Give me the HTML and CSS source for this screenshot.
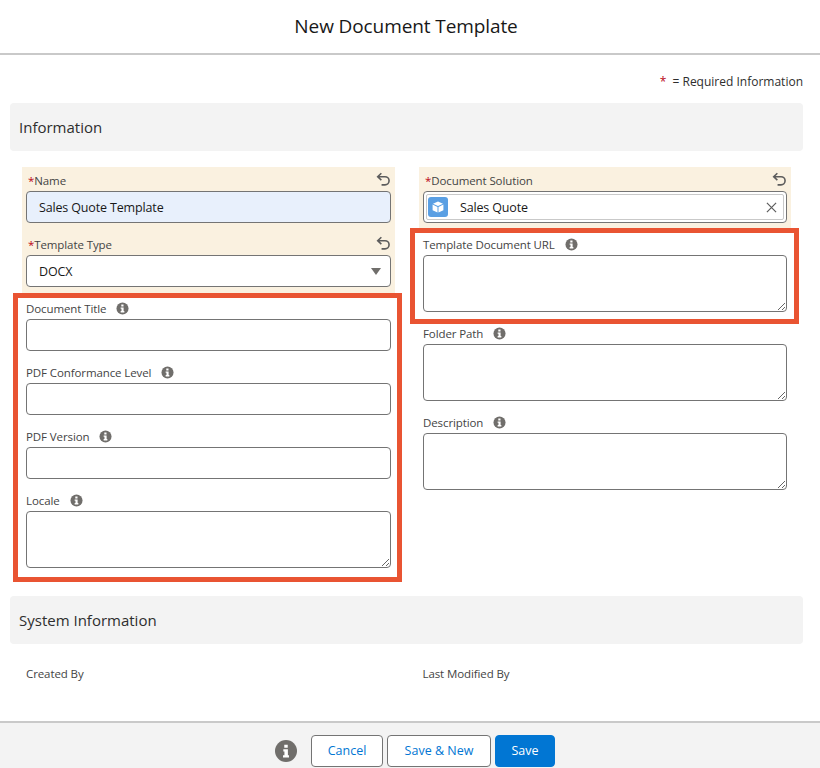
FILE: index.html
```html
<!DOCTYPE html>
<html lang="en">
<head>
<meta charset="utf-8">
<title>New Document Template</title>
<link rel="stylesheet" href="styles.css">
</head>
<body>
<div class="page">
  <header class="header"><h1>New Document Template</h1></header>
  <main class="main">
    <p class="required"><span class="star">*</span> <span class="req-text">= Required Information</span></p>
    <h2 class="section">Information</h2>
    <div class="columns">
      <div class="col">
        <div class="field changed">
          <div class="label"><span class="star">*</span>Name
            <button class="undo" aria-label="Undo"><svg viewBox="0 0 14 14"><path d="M5 1.200 1.600 4.400 5 7.600M1.800 4.400H8.400a3.800 3.800 0 0 1 0 7.600H5.200"/></svg></button>
          </div>
          <div class="control filled">Sales Quote Template</div>
        </div>
        <div class="field changed">
          <div class="label"><span class="star">*</span>Template Type
            <button class="undo" aria-label="Undo"><svg viewBox="0 0 14 14"><path d="M5 1.200 1.600 4.400 5 7.600M1.800 4.400H8.400a3.800 3.800 0 0 1 0 7.600H5.200"/></svg></button>
          </div>
          <div class="control select">DOCX<svg class="caret" viewBox="0 0 10 7"><path d="M0 0h10L5 7z"/></svg></div>
        </div>
        <div class="field">
          <div class="label">Document Title<svg class="info" viewBox="0 0 14 14"><circle cx="7" cy="7" r="6.5"/><path class="i" d="M5.7 2.8h2.4v2H5.7zM5 5.9h3.2v3.8h.8v1.5H5V9.700h.9V7.400H5z"/></svg></div>
          <input class="control" type="text" aria-label="Document Title">
        </div>
        <div class="field">
          <div class="label">PDF Conformance Level<svg class="info" viewBox="0 0 14 14"><circle cx="7" cy="7" r="6.5"/><path class="i" d="M5.7 2.8h2.4v2H5.7zM5 5.9h3.2v3.8h.8v1.500H5V9.700h.9V7.400H5z"/></svg></div>
          <input class="control" type="text" aria-label="PDF Conformance Level">
        </div>
        <div class="field">
          <div class="label">PDF Version<svg class="info" viewBox="0 0 14 14"><circle cx="7" cy="7" r="6.5"/><path class="i" d="M5.7 2.8h2.4v2H5.7zM5 5.9h3.2v3.8h.8v1.500H5V9.700h.9V7.400H5z"/></svg></div>
          <input class="control" type="text" aria-label="PDF Version">
        </div>
        <div class="field">
          <div class="label">Locale<svg class="info" viewBox="0 0 14 14"><circle cx="7" cy="7" r="6.5"/><path class="i" d="M5.7 2.8h2.4v2H5.7zM5 5.9h3.2v3.8h.8v1.500H5V9.700h.9V7.400H5z"/></svg></div>
          <textarea class="control area" aria-label="Locale"></textarea>
        </div>
      </div>
      <div class="col">
        <div class="field changed">
          <div class="label"><span class="star">*</span>Document Solution
            <button class="undo" aria-label="Undo"><svg viewBox="0 0 14 14"><path d="M5 1.200 1.600 4.400 5 7.600M1.800 4.400H8.400a3.800 3.800 0 0 1 0 7.600H5.200"/></svg></button>
          </div>
          <div class="control lookup">
            <div class="pill">
              <span class="pill-icon"><svg viewBox="0 0 20 20"><path class="cube-top" d="M10 4.500 15 6.800 10 9.100 5 6.800z"/><path class="cube-side" d="M4.600 7.600 9.500 9.900V15.500L4.600 13.200zM15.400 7.600 10.500 9.900V15.500L15.400 13.200z"/></svg></span>
              <span class="pill-text">Sales Quote</span>
              <svg class="clear" viewBox="0 0 12 12"><path d="M1 1 11 11M11 1 1 11"/></svg>
            </div>
          </div>
        </div>
        <div class="field">
          <div class="label">Template Document URL<svg class="info" viewBox="0 0 14 14"><circle cx="7" cy="7" r="6.5"/><path class="i" d="M5.7 2.8h2.4v2H5.7zM5 5.9h3.2v3.8h.8v1.500H5V9.700h.9V7.400H5z"/></svg></div>
          <textarea class="control area" aria-label="Template Document URL"></textarea>
        </div>
        <div class="field">
          <div class="label">Folder Path<svg class="info" viewBox="0 0 14 14"><circle cx="7" cy="7" r="6.5"/><path class="i" d="M5.7 2.8h2.4v2H5.7zM5 5.9h3.2v3.8h.8v1.500H5V9.700h.9V7.400H5z"/></svg></div>
          <textarea class="control area" aria-label="Folder Path"></textarea>
        </div>
        <div class="field">
          <div class="label">Description<svg class="info" viewBox="0 0 14 14"><circle cx="7" cy="7" r="6.5"/><path class="i" d="M5.7 2.8h2.4v2H5.7zM5 5.9h3.2v3.8h.8v1.500H5V9.700h.9V7.400H5z"/></svg></div>
          <textarea class="control area" aria-label="Description"></textarea>
        </div>
      </div>
    </div>
    <h2 class="section system">System Information</h2>
    <div class="columns meta">
      <div class="meta-item">Created By</div>
      <div class="meta-item">Last Modified By</div>
    </div>
  </main>
  <footer class="footer">
    <svg class="footer-info" viewBox="0 0 14 14"><circle cx="7" cy="7" r="7"/><path class="i" d="M5.900 3h2.200v1.900H5.900zM5.300 5.900h2.900v3.800h.7v1.400H5.100V9.700h.9V7.300h-.7z"/></svg>
    <button class="btn btn-cancel">Cancel</button>
    <button class="btn btn-new">Save &amp; New</button>
    <button class="btn btn-save">Save</button>
  </footer>
  <div class="callout callout-left"></div>
  <div class="callout callout-right"></div>
</div>
</body>
</html>
```
FILE: styles.css
```css
* { box-sizing: border-box; }
html, body { margin: 0; padding: 0; }
body {
  font-family: "Open Sans", "Noto Sans", sans-serif;
  color: #181818;
  background: #fff;
  overflow: hidden;
}
.page {
  position: relative;
  width: 820px;
  height: 768px;
  display: flex;
  flex-direction: column;
}
.header {
  height: 55px;
  padding: 0 8px 2px 0;
  border-bottom: 2px solid #c9c9c9;
  display: flex;
  align-items: center;
  justify-content: center;
  flex: none;
}
.header h1 {
  margin: 0;
  font-size: 19px;
  font-weight: 400;
  line-height: 24px;
  letter-spacing: -0.1px;
}
.main {
  flex: 1;
  padding: 16px 17px 0 10px;
}
.required {
  margin: 0 0 12px;
  height: 20px;
  line-height: 21px;
  font-size: 12px;
  text-align: right;
  color: #2e2e2e;
}
.req-text { margin-left: 3px; }
.star { color: #ba0517; }
.section {
  margin: 0;
  height: 48px;
  padding-left: 9px;
  line-height: 48px;
  font-size: 15px;
  font-weight: 400;
  color: #2e2e2e;
  background: #f3f3f3;
  border-radius: 4px;
}
.system { margin-top: 20px; }
.columns {
  display: grid;
  grid-template-columns: 373px 372px;
  column-gap: 24px;
  padding: 16px 12px 0;
}
.field { padding: 0 4px 8px; }
.changed { background: #faf1e0; }
.label {
  height: 24px;
  font-size: 11.5px;
  letter-spacing: -0.1px;
  line-height: 20px;
  padding-top: 3px;
  color: #444;
  display: flex;
  align-items: center;
}
.label .star { margin: 0 0 0 2px; }
.undo {
  margin-left: auto;
  border: 0;
  background: none;
  padding: 0;
  width: 15px;
  height: 15px;
  position: relative;
  top: -1px;
}
.undo svg { display: block; width: 15px; height: 15px; fill: none; stroke: #5c5c5c; stroke-width: 1.500; }
.info { width: 13px; height: 13px; margin-left: 10px; flex: none; }
.info circle { fill: #706e6b; }
.i { fill: #fff; }
.control {
  display: block;
  width: 100%;
  height: 32px;
  border: 1px solid #747474;
  border-radius: 4px;
  background: #fff;
  font: inherit;
  font-size: 12.5px;
  letter-spacing: -0.15px;
  line-height: 30px;
  color: #181818;
  padding: 1px 12px 0;
  outline: 0;
}
.filled { background: #e8f0fc; }
.select { position: relative; }
.caret { position: absolute; right: 8px; top: 12px; width: 12px; height: 7px; fill: #706e6b; }
.area { height: 57px; resize: vertical; }
.control.lookup { padding: 2px; }
.pill {
  height: 26px;
  border: 1px solid #c9c9c9;
  border-radius: 2px;
  display: flex;
  align-items: center;
  padding: 0 6px 0 1px;
  line-height: 24px;
}
.pill-icon {
  width: 20px;
  height: 20px;
  flex: none;
  border-radius: 3px;
  background: #5a9fe3;
}
.pill-icon svg { display: block; width: 20px; height: 20px; }
.cube-top, .cube-side { fill: #fff; }
.pill-text { margin-left: 12px; position: relative; top: 1px; }
.clear { margin-left: auto; width: 11px; height: 11px; fill: none; stroke: #5c5c5c; stroke-width: 1.300; }
.meta { padding: 20px 16px 0; grid-template-columns: 372.500px 372px; }
.meta-item { font-size: 11.5px; letter-spacing: -0.1px; line-height: 20px; color: #444; }
.footer {
  flex: none;
  height: 47px;
  border-top: 2px solid #c9c9c9;
  background: #f3f3f3;
  padding: 12px 0 0 10px;
  display: flex;
  align-items: flex-start;
  justify-content: center;
  gap: 4px;
}
.footer-info { width: 22px; height: 22px; margin: 5px 10px 0 0; }
.footer-info circle { fill: #706e6b; }
.btn {
  height: 32px;
  padding: 0;
  border: 1px solid #747474;
  border-radius: 4px;
  background: #fff;
  color: #0176d3;
  font: inherit;
  font-size: 12.5px;
  line-height: 30px;
}
.btn-cancel { width: 72px; }
.btn-new { width: 104px; }
.btn-save { width: 60px; background: #0176d3; border-color: #0176d3; color: #fff; }
.callout { position: absolute; border: 5px solid #e95432; pointer-events: none; }
.callout-left { left: 13px; top: 293px; width: 389px; height: 289px; }
.callout-right { left: 410px; top: 228px; width: 389px; height: 96px; }
```
